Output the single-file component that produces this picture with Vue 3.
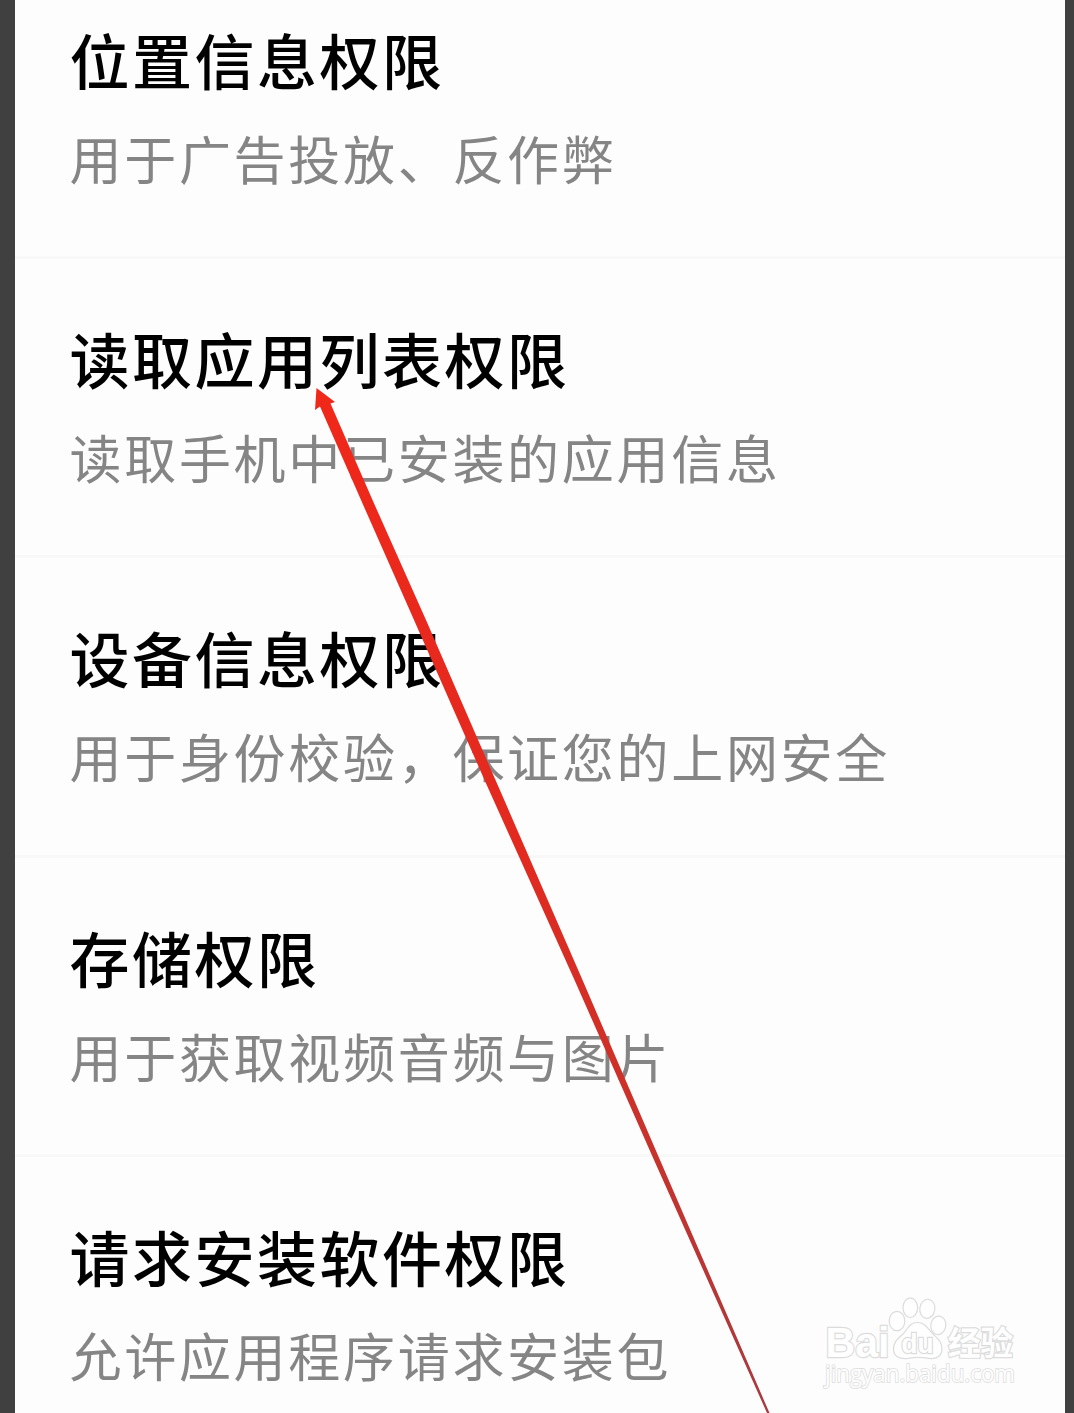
<script setup>
const permissions = [
    { title: "位置信息权限", desc: "用于广告投放、反作弊" },
    { title: "读取应用列表权限", desc: "读取手机中已安装的应用信息" },
    { title: "设备信息权限", desc: "用于身份校验，保证您的上网安全" },
    { title: "存储权限", desc: "用于获取视频音频与图片" },
    { title: "请求安装软件权限", desc: "允许应用程序请求安装包" },
]
</script>

<template>
    <div class="screen">
        <main class="permission-list">
            <section v-for="item in permissions" :key="item.title" class="permission-item">
                <h2 class="permission-title">{{ item.title }}</h2>
                <p class="permission-desc">{{ item.desc }}</p>
            </section>
        </main>

        <!-- 矢印 -->
        <svg class="arrow" viewBox="0 0 1074 1413" aria-hidden="true">
            <defs>
                <linearGradient id="arrowColor" gradientUnits="userSpaceOnUse" x1="0" y1="388" x2="0" y2="1413">
                    <stop offset="0" stop-color="#f0281a" />
                    <stop offset="0.45" stop-color="#e22a20" />
                    <stop offset="0.75" stop-color="#c6332c" />
                    <stop offset="1" stop-color="#a83a40" />
                </linearGradient>
            </defs>
            <path d="M316.5 388 L335 402 L330.5 403.5 L372.5 500 L426 620 L495.5 780 L582.5 980 L660 1160 L769.5 1413 L767 1413 L654 1160 L574.5 980 L484.5 780 L414 620 L361 500 L320 406.5 L315 410 Z" fill="url(#arrowColor)" />
        </svg>

        <!-- 透かし -->
        <svg class="watermark" viewBox="0 0 210 100">
            <g class="watermark-logo">
                <text x="3.5" y="60.5" class="logo-latin" textLength="64" lengthAdjust="spacingAndGlyphs">Bai</text>
                <ellipse cx="75" cy="25" rx="7.8" ry="9.7" />
                <ellipse cx="88.3" cy="11.7" rx="7.3" ry="9.8" />
                <ellipse cx="105.3" cy="12.8" rx="7.5" ry="9.6" transform="rotate(8 105.3 12.8)" />
                <ellipse cx="116.3" cy="29.3" rx="7.5" ry="9.3" transform="rotate(8 116.3 29.3)" />
                <path d="M95.5 26.5 C103 26.5 106 33 111 38 C116 43 120 46 120 53 C120 60 114 63.5 107 62.3 C99 61 93 61 86 62.3 C77 63.5 71.5 60 71.5 53 C71.5 45 77 42 82 37 C86 32 88 26.5 95.5 26.5 Z" />
                <text x="79.5" y="57" class="logo-du" textLength="32" lengthAdjust="spacingAndGlyphs">du</text>
                <text x="126" y="58.5" class="logo-cjk" textLength="65" lengthAdjust="spacingAndGlyphs">经验</text>
                <text x="3" y="86" class="logo-url" textLength="190" lengthAdjust="spacingAndGlyphs">jingyan.baidu.com</text>
            </g>
        </svg>
    </div>
</template>

<style>
body {
    margin: 0;
    background: #404040;
}
</style>

<style scoped>
.screen {
    position: relative;
    box-sizing: border-box;
    width: 1074px;
    height: 1413px;
    padding: 0 9px 0 15px;
    overflow: hidden;
    background: #404040;
    font-family: "Noto Sans CJK SC", sans-serif;
}
.permission-list {
    display: flow-root;
    height: 1413px;
    overflow: hidden;
    background: #fdfdfd;
}
.permission-item {
    box-sizing: border-box;
    height: 299.2px;
    padding: 64px 0 0 54.5px;
    border-bottom: 3px solid #f8f8f8;
}
.permission-item:first-child {
    margin-top: -40px;
}
.permission-title {
    margin: 0 0 34px;
    color: #000;
    font-size: 60px;
    font-weight: 500;
    line-height: 70px;
    letter-spacing: 2.5px;
    white-space: nowrap;
}
.permission-desc {
    margin: 0;
    color: #858585;
    font-size: 52px;
    font-weight: 400;
    line-height: 60px;
    letter-spacing: 2.7px;
    white-space: nowrap;
}
.arrow {
    position: absolute;
    top: 0;
    left: 0;
    width: 1074px;
    height: 1413px;
}
.watermark {
    position: absolute;
    top: 1296px;
    left: 822px;
    width: 210px;
    height: 100px;
    overflow: visible;
}
.watermark-logo {
    fill: #fff;
    stroke: #dcdcdc;
    stroke-width: 1.2px;
}
.watermark-logo text {
    paint-order: stroke;
    stroke-width: 2.4px;
}
.watermark-logo .logo-latin {
    font-family: "Liberation Sans", sans-serif;
    font-size: 43px;
    font-weight: 700;
}
.watermark-logo .logo-du {
    font-family: "Liberation Sans", sans-serif;
    font-size: 27px;
    font-weight: 700;
}
.watermark-logo .logo-cjk {
    font-size: 33px;
    font-weight: 700;
}
.watermark-logo .logo-url {
    font-family: "Open Sans", sans-serif;
    font-size: 23px;
    stroke-width: 1.6px;
}
</style>
